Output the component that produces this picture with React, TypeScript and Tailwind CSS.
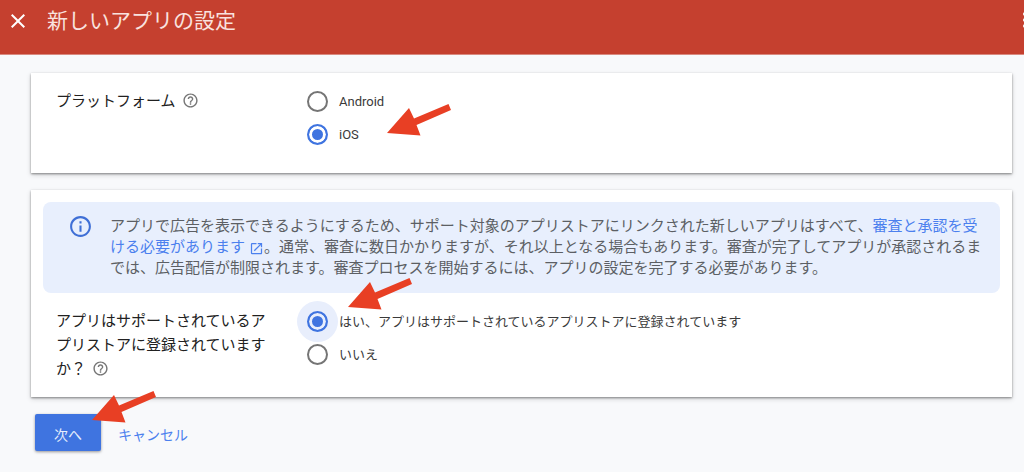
import { useState, type ReactNode } from "react";
import {
  MdClose,
  MdHelpOutline,
  MdInfoOutline,
  MdMoreVert,
  MdOpenInNew,
} from "react-icons/md";
import clsx from "clsx";

const platforms = [
  { value: "android", label: "Android" },
  { value: "ios", label: "iOS", arrow: true },
];

const storeOptions = [
  {
    value: "yes",
    label: "はい、アプリはサポートされているアプリストアに登録されています",
    arrow: true,
  },
  { value: "no", label: "いいえ" },
];

function Arrow({ className }: { className: string }) {
  return (
    <svg
      viewBox="0 0 64 32"
      aria-hidden="true"
      className={clsx("pointer-events-none absolute z-10 h-8 w-16", className)}
    >
      <path
        d="M0 29 22 4 27 14.5 61.5 0 64 6 29.5 21 33.5 31.5Z"
        fill="#e83f24"
      />
    </svg>
  );
}

function HelpButton() {
  return (
    <button
      type="button"
      aria-label="ヘルプ"
      className="ml-1.5 inline-block align-[-3px] text-[#757575]"
    >
      <MdHelpOutline size={17} />
    </button>
  );
}

type RadioProps = {
  name: string;
  label: string;
  checked: boolean;
  halo?: boolean;
  onChange: () => void;
  children?: ReactNode;
};

function Radio({ name, label, checked, halo, onChange, children }: RadioProps) {
  return (
    <label className="relative flex h-[33px] w-fit cursor-pointer items-center gap-[11px] text-[13px] text-[#3a3a3a]">
      <input
        type="radio"
        name={name}
        checked={checked}
        onChange={onChange}
        className={clsx(
          "size-[21px] shrink-0 cursor-pointer appearance-none rounded-full border-2 outline-none",
          checked ? "border-[#3f74e0] bg-[#3f74e0]" : "border-[#757575]",
          checked && !halo && "shadow-[inset_0_0_0_3px_#ffffff]",
          checked &&
            halo &&
            "shadow-[inset_0_0_0_3px_#e8eefc,0_0_0_10px_#e8eefc]"
        )}
      />
      <span className="relative">{label}</span>
      {children}
    </label>
  );
}

function Field({ label, children }: { label: string; children: ReactNode }) {
  return (
    <div
      role="radiogroup"
      aria-label={label}
      className="flex gap-[31px] pl-[13px]"
    >
      <div className="w-[220px] shrink-0 pt-1 text-[15px] leading-6 text-[#212121]">
        {label}
        <HelpButton />
      </div>
      <div className="min-w-0">{children}</div>
    </div>
  );
}

function Card({ children }: { children: ReactNode }) {
  return (
    <section className="bg-white px-3 pt-3 shadow-[0_1px_2px_rgba(0,0,0,0.4),0_2px_5px_rgba(0,0,0,0.16)]">
      {children}
    </section>
  );
}

export default function App() {
  const [platform, setPlatform] = useState("ios");
  const [listed, setListed] = useState("yes");

  return (
    <div className="min-h-screen bg-[#f8f9fb] font-['Roboto','Noto_Sans_CJK_JP',sans-serif]">
      <header className="flex items-start overflow-hidden border-b border-[#d98a80] bg-[#c5402f] pb-3 text-white">
        <button type="button" aria-label="閉じる" className="ml-1.5 py-[9px]">
          <MdClose size={24} />
        </button>
        <h1 className="ml-[17px] flex-1 text-[21px] leading-[42px] text-[#f9e2df]">
          新しいアプリの設定
        </h1>
        <button
          type="button"
          aria-label="その他"
          className="-mr-[13px] shrink-0 py-2"
        >
          <MdMoreVert size={24} />
        </button>
      </header>

      <main className="pt-[18px] pr-3 pb-5 pl-[31px]">
        <div className="space-y-[17px]">
          <Card>
            <div className="pb-[22px]">
              <Field label="プラットフォーム">
                {platforms.map((item) => (
                  <Radio
                    key={item.value}
                    name="platform"
                    label={item.label}
                    checked={platform === item.value}
                    onChange={() => setPlatform(item.value)}
                  >
                    {item.arrow && <Arrow className="top-[-14px] left-20" />}
                  </Radio>
                ))}
              </Field>
            </div>
          </Card>

          <Card>
            <div className="flex items-start gap-[17px] rounded-lg bg-[#e8effd] py-3 pr-3 pl-[25px]">
              <MdInfoOutline size={25} className="shrink-0 text-[#3f6fd6]" />
              <p className="py-0.5 text-[15px] leading-[21px] text-[#5c5f64]">
                アプリで広告を表示できるようにするため、サポート対象のアプリストアにリンクされた新しいアプリはすべて、
                <a href="#review" className="text-[#4b80ee]">
                  審査と承認を受ける必要があります
                  <MdOpenInNew size={15} className="ml-1 inline-block" />
                </a>
                。通常、審査に数日かかりますが、それ以上となる場合もあります。審査が完了してアプリが承認されるまでは、広告配信が制限されます。審査プロセスを開始するには、アプリの設定を完了する必要があります。
              </p>
            </div>
            <div className="pt-3 pb-4">
              <Field label="アプリはサポートされているアプリストアに登録されていますか？">
                {storeOptions.map((item) => (
                  <Radio
                    key={item.value}
                    name="listed"
                    label={item.label}
                    checked={listed === item.value}
                    halo
                    onChange={() => setListed(item.value)}
                  >
                    {item.arrow && <Arrow className="top-[-27px] left-[41px]" />}
                  </Radio>
                ))}
              </Field>
            </div>
          </Card>
        </div>

        <div className="mt-[17px] ml-1 flex gap-[17px] text-sm">
          <div className="relative">
            <button
              type="button"
              className="h-[37px] rounded-xs bg-[#3f74e0] px-[19px] pt-1 text-[#e6eefc] shadow-[0_1px_3px_rgba(0,0,0,0.4)]"
            >
              次へ
            </button>
            <Arrow className="top-[-23px] left-[57px]" />
          </div>
          <button type="button" className="h-[37px] pt-1 text-[#4b80ee]">
            キャンセル
          </button>
        </div>
      </main>
    </div>
  );
}
